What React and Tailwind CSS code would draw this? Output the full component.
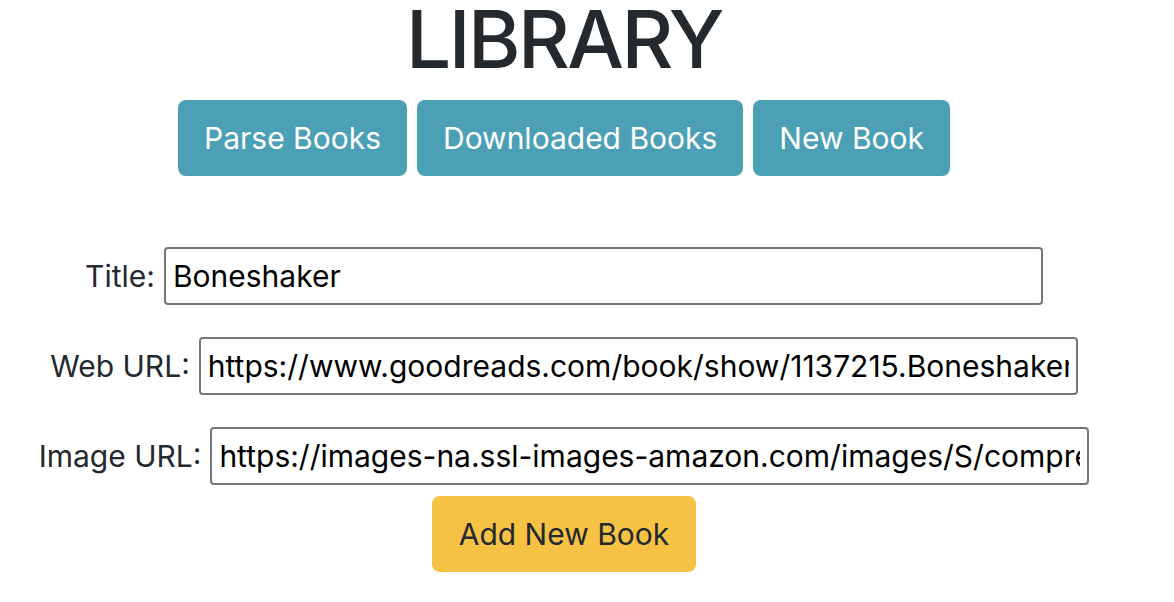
import React from "react";

const font = { fontFamily: "Inter, 'Liberation Sans', sans-serif" };

const Field = ({ label, value }) => (
  <div className="flex items-center justify-center gap-[9px]">
    <label className="text-[30px] text-[#24292e]">{label}</label>
    <input
      className="w-[879px] h-[58px] border-2 border-[#767676] rounded-[4px] px-[7px] text-[30px] text-black outline-none"
      defaultValue={value}
      readOnly
    />
  </div>
);

export default function App() {
  return (
    <div className="w-[1128px] bg-white text-center text-[#24292e]" style={font}>
      <h1 className="text-[80px] leading-[78px] font-medium tracking-[-2.5px]">LIBRARY</h1>

      <div className="mt-[22px] flex justify-center gap-[10px]">
        {["Parse Books", "Downloaded Books", "New Book"].map((t) => (
          <button key={t} className="h-[76px] px-[26px] rounded-[8px] bg-[#4ca0b6] text-white text-[30px]">
            {t}
          </button>
        ))}
      </div>

      <div className="mt-[71px] flex flex-col gap-[32px]">
        <Field label="Title:" value="Boneshaker" />
        <Field label="Web URL:" value="https://www.goodreads.com/book/show/1137215.Boneshaker" />
        <Field label="Image URL:" value="https://images-na.ssl-images-amazon.com/images/S/compressed.photo.goodreads.com/books/1" />
      </div>

      <button className="mt-[11px] h-[76px] px-[27px] rounded-[8px] bg-[#f6c244] text-[#24292e] text-[30px]">
        Add New Book
      </button>
    </div>
  );
}
